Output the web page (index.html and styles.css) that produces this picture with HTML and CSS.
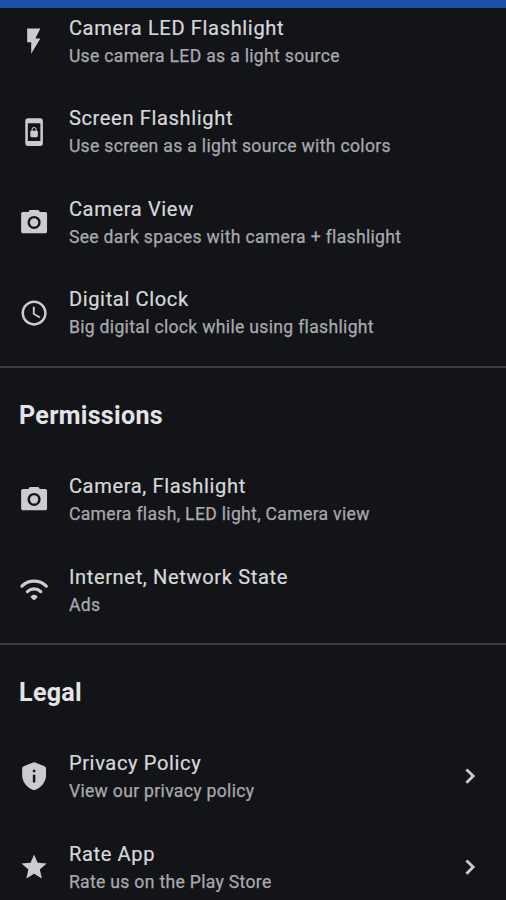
FILE: index.html
```html
<!DOCTYPE html>
<html lang="en">
<head>
<meta charset="utf-8">
<title>Settings</title>
<link rel="stylesheet" href="styles.css">
</head>
<body>
<svg class="defs" aria-hidden="true">
  <symbol id="camera" viewBox="0 0 24 24"><path fill-rule="evenodd" d="M8.6 2.3 7.4 3.900H3.200c-.9 0-1.500.6-1.500 1.500v14c0 .9.6 1.500 1.500 1.500h17.600c.9 0 1.500-.6 1.500-1.500v-14c0-.9-.6-1.500-1.500-1.500h-4.200l-1.200-1.600zm3.400 15.200a5.200 5.200 0 1 1 0-10.400 5.200 5.200 0 0 1 0 10.400z"/><circle cx="12" cy="12.300" r="3.300"/></symbol>
  <symbol id="chevron" viewBox="0 0 24 24"><path d="M9.900 5.900 8.300 7.500l4.500 4.500-4.500 4.500 1.600 1.600 6.100-6.100z"/></symbol>
</svg>
<header class="bar"></header>
<main>
  <section class="group first">
    <div class="row">
      <svg class="icon" viewBox="0 0 24 24"><path d="M6.500 2v11h3.200v9l7.300-12h-4l4-8z"/></svg>
      <div class="text"><div class="title">Camera LED Flashlight</div><div class="sub">Use camera LED as a light source</div></div>
    </div>
    <div class="row">
      <svg class="icon" viewBox="0 0 24 24"><path d="M10 16h4c.55 0 1-.45 1-1v-3c0-.55-.45-1-1-1v-1c0-1.11-.9-2-2-2-1.11 0-2 .9-2 2v1c-.55 0-1 .45-1 1v3c0 .55.45 1 1 1zm.8-6c0-.66.54-1.2 1.2-1.2.66 0 1.2.54 1.2 1.2v1h-2.4v-1zM17 1H7c-1.1 0-2 .9-2 2v18c0 1.1.9 2 2 2h10c1.1 0 2-.9 2-2V3c0-1.1-.9-2-2-2zm0 18H7V5h10v14z"/></svg>
      <div class="text"><div class="title">Screen Flashlight</div><div class="sub">Use screen as a light source with colors</div></div>
    </div>
    <div class="row">
      <svg class="icon"><use href="#camera"/></svg>
      <div class="text"><div class="title">Camera View</div><div class="sub">See dark spaces with camera + flashlight</div></div>
    </div>
    <div class="row">
      <svg class="icon" viewBox="0 0 24 24"><path d="M11.99 2C6.47 2 2 6.48 2 12s4.47 10 9.99 10C17.52 22 22 17.52 22 12S17.52 2 11.99 2zM12 20c-4.42 0-8-3.58-8-8s3.58-8 8-8 8 3.58 8 8-3.58 8-8 8zm.5-13H11v6l5.25 3.15.75-1.23-4.5-2.67z"/></svg>
      <div class="text"><div class="title">Digital Clock</div><div class="sub">Big digital clock while using flashlight</div></div>
    </div>
  </section>
  <section class="group">
    <h2>Permissions</h2>
    <div class="row">
      <svg class="icon"><use href="#camera"/></svg>
      <div class="text"><div class="title">Camera, Flashlight</div><div class="sub">Camera flash, LED light, Camera view</div></div>
    </div>
    <div class="row">
      <svg class="icon" viewBox="0 0 24 24"><path class="wave" d="M2.300 8.800a14 14 0 0 1 19.400 0M6.700 13.200a7.700 7.700 0 0 1 10.600 0"/><path d="M9.500 16.800a3.700 3.700 0 0 1 5 0q.5.5 0 1l-1.800 1.800q-.7.700-1.400 0l-1.800-1.800q-.5-.5 0-1z"/></svg>
      <div class="text"><div class="title">Internet, Network State</div><div class="sub">Ads</div></div>
    </div>
  </section>
  <section class="group">
    <h2>Legal</h2>
    <div class="row">
      <svg class="icon" viewBox="0 0 24 24"><path fill-rule="evenodd" d="M11.200 1.100 3.700 4.100Q2.500 4.700 2.500 5.900V11c0 5.800 3.900 10.700 9.500 12.200 5.600-1.500 9.500-6.400 9.500-12.200V5.900Q21.500 4.700 20.300 4.100l-7.500-3a2 2 0 0 0-1.600 0zM11 7h2v2h-2zm0 4h2v6h-2z"/></svg>
      <div class="text"><div class="title">Privacy Policy</div><div class="sub">View our privacy policy</div></div>
      <svg class="icon chev"><use href="#chevron"/></svg>
    </div>
    <div class="row">
      <svg class="icon" viewBox="0 0 24 24"><path d="M12 17.270 18.180 21l-1.640-7.030L22 9.240l-7.190-.610L12 2 9.190 8.630 2 9.240l5.460 4.730L5.820 21z"/></svg>
      <div class="text"><div class="title">Rate App</div><div class="sub">Rate us on the Play Store</div></div>
      <svg class="icon chev"><use href="#chevron"/></svg>
    </div>
  </section>
</main>
</body>
</html>
```
FILE: styles.css
```css
* { box-sizing: border-box; }
html, body { height: 100%; }
body {
  margin: 0;
  display: flex;
  flex-direction: column;
  overflow: hidden;
  background: #131418;
  color: #d8d8dc;
  font-family: Roboto, sans-serif;
}
.defs { display: none; }
.bar { flex: none; height: 8px; background: #1b50a8; }
main { flex: 1; min-height: 0; overflow: hidden; }
.group { border-top: 2px solid #3d3e42; padding-top: 9px; }
.group + .group { margin-top: 8.3px; }
.group.first { border: 0; padding: 0; margin-top: -12.1px; }
h2 {
  margin: 0;
  height: 76.8px;
  padding-left: 19px;
  line-height: 77px;
  font-size: 25.1px;
  font-weight: 700;
  letter-spacing: .3px;
  color: #e4e4e8;
}
.row {
  display: flex;
  align-items: center;
  height: 90.5px;
  padding: 0 21px 0 18.5px;
}
.icon { flex: none; width: 30.2px; height: 30.2px; fill: #cbcbd2; }
.wave { fill: none; stroke: #cbcbd2; stroke-width: 2.6; stroke-linecap: round; }
.text { flex: 1; margin-left: 20.2px; white-space: nowrap; }
.title { font-size: 20.1px; line-height: 30px; letter-spacing: .63px; -webkit-text-stroke: .2px; }
.sub { font-size: 17.6px; line-height: 26.4px; letter-spacing: .31px; color: #a9a9af; -webkit-text-stroke: .25px; }
```
